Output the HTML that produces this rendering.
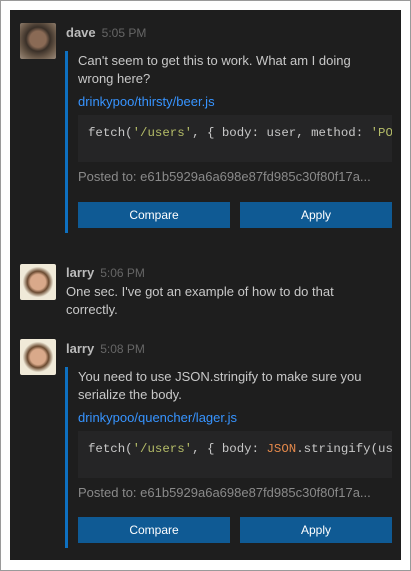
<!DOCTYPE html>
<html><head><style>
body{margin:0;width:411px;height:571px;background:#fff;position:relative;overflow:hidden;font-family:"Liberation Sans",sans-serif}
.frame{position:absolute;left:0;top:0;width:409px;height:569px;border:1px solid #9a9a9a}
.panel{position:absolute;left:10px;top:10px;width:391px;height:550px;background:#1e1e1e}
.a{position:absolute;width:36px;height:36px;border-radius:2px}
.dave{background:radial-gradient(circle at 50% 45%,#8a6a55 0 30%,#3a3028 45%,#6b5a4a 70%,#9b8a7a)}
.larry{background:radial-gradient(ellipse at 50% 50%,#d9a98a 0 30%,#6a4a30 42%,#f0ead8 60%)}
.n{position:absolute;font-size:13px;font-weight:bold;color:#bbb;line-height:16px}
.n span{font-weight:normal;color:#666;font-size:12px;margin-left:6px}
.t{position:absolute;font-size:13px;color:#c8c8c8;line-height:18px}
.bar{position:absolute;left:65px;width:3px;background:#0e70c0}
.l{position:absolute;left:78px;font-size:13px;color:#3794ff}
.code{position:absolute;left:78px;width:314px;height:47px;background:#252526;overflow:hidden}
.code div{position:absolute;left:10px;top:11px;font-family:"Liberation Mono",monospace;font-size:12.4px;color:#c8c8c8;white-space:nowrap}
.s{color:#b5bd68}.o{color:#e5894b}
.p{position:absolute;left:78px;font-size:13px;color:#8a8a8a;white-space:nowrap}
.b{position:absolute;width:152px;height:26px;background:#0f5a94;color:#fff;font-size:12px;text-align:center;line-height:26px}
</style></head><body>
<div class="frame"></div>
<div class="panel"></div>
<div class="a dave" style="left:20px;top:23px"></div>
<div class="n" style="left:66px;top:25px">dave<span>5:05 PM</span></div>
<div class="bar" style="top:51px;height:182px"></div>
<div class="t" style="left:78px;top:52px;width:320px">Can't seem to get this to work. What am I doing<br>wrong here?</div>
<div class="l" style="top:94px">drinkypoo/thirsty/beer.js</div>
<div class="code" style="top:115px"><div>fetch(<span class="s">'/users'</span>, { body: user, method: <span class="s">'POST'</span> })</div></div>
<div class="p" style="top:169px">Posted to: e61b5929a6a698e87fd985c30f80f17a...</div>
<div class="b" style="left:78px;top:202px">Compare</div>
<div class="b" style="left:240px;top:202px">Apply</div>

<div class="a larry" style="left:20px;top:264px"></div>
<div class="n" style="left:66px;top:265px">larry<span>5:06 PM</span></div>
<div class="t" style="left:66px;top:283px;width:330px">One sec. I've got an example of how to do that<br>correctly.</div>

<div class="a larry" style="left:20px;top:339px"></div>
<div class="n" style="left:66px;top:341px">larry<span>5:08 PM</span></div>
<div class="bar" style="top:367px;height:181px"></div>
<div class="t" style="left:78px;top:368px;width:320px">You need to use JSON.stringify to make sure you<br>serialize the body.</div>
<div class="l" style="top:410px">drinkypoo/quencher/lager.js</div>
<div class="code" style="top:431px"><div>fetch(<span class="s">'/users'</span>, { body: <span class="o">JSON</span>.stringify(user) })</div></div>
<div class="p" style="top:485px">Posted to: e61b5929a6a698e87fd985c30f80f17a...</div>
<div class="b" style="left:78px;top:517px">Compare</div>
<div class="b" style="left:240px;top:517px">Apply</div>
</body></html>
